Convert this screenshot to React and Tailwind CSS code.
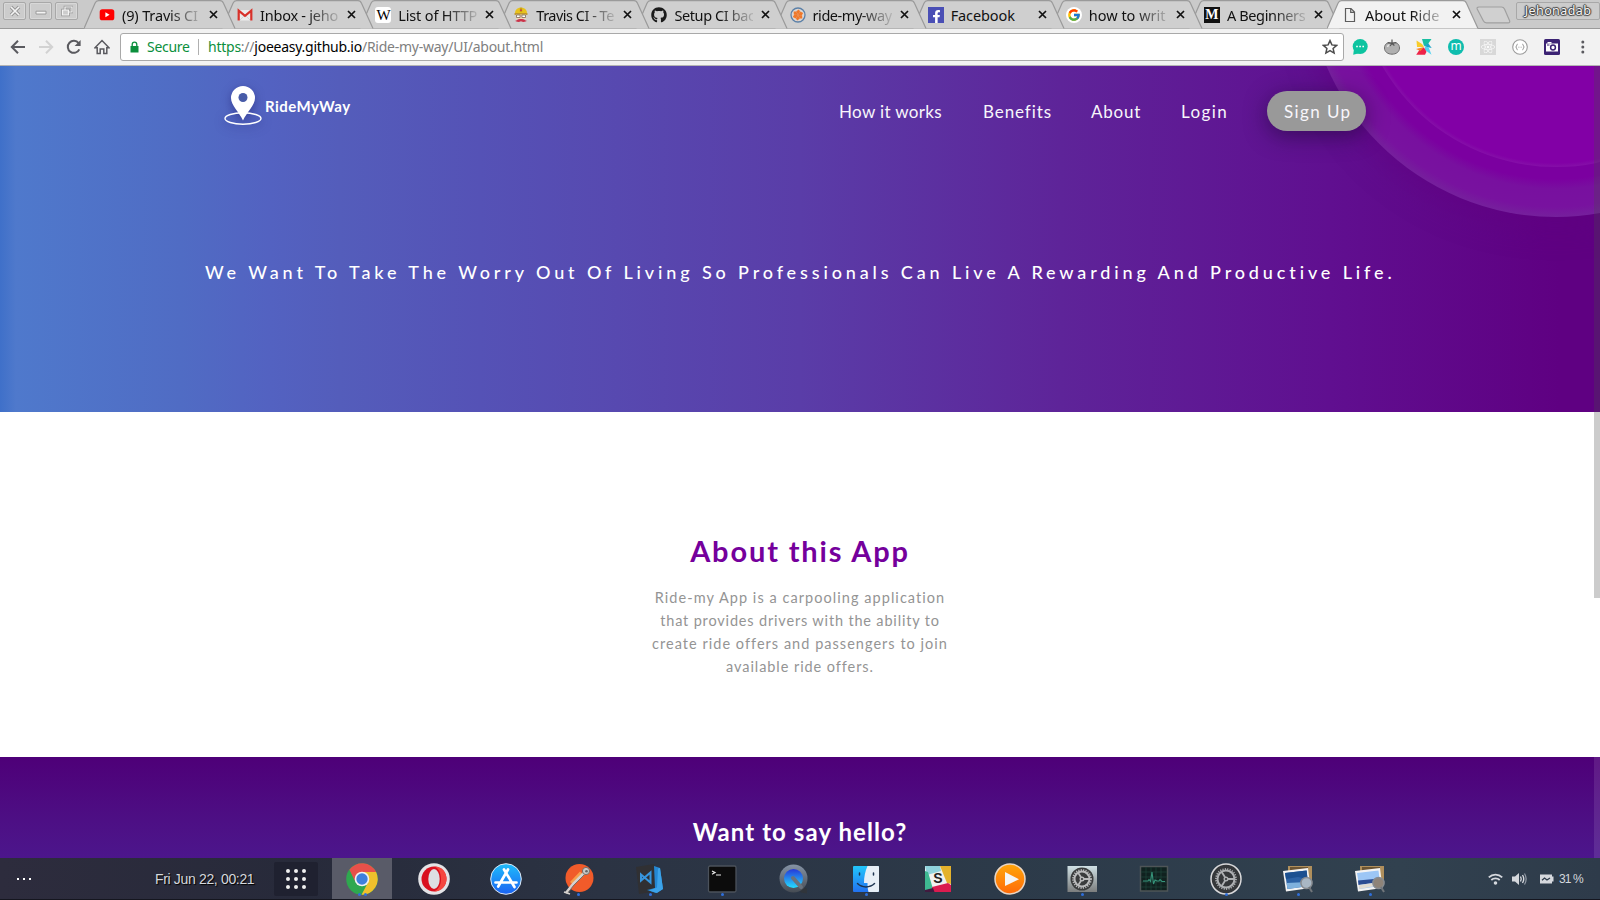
import React from "react";
import { FcGoogle } from "react-icons/fc";
import { FaGithub, FaFacebookF, FaReact } from "react-icons/fa";

const Svg = ({ size = 16, box = 16, className = "", children }) => (
  <svg width={size} height={size} viewBox={`0 0 ${box} ${box}`} className={`block shrink-0 ${className}`} fill="none">
    {children}
  </svg>
);

/* ---------- favicons ---------- */

const YouTube = () => (
  <Svg>
    <rect x="0.7" y="2.3" width="14.6" height="11" rx="2.6" fill="#f00" />
    <path d="M6.4 5.3v5l4.2-2.5z" fill="#fff" />
  </Svg>
);
const Gmail = () => (
  <Svg>
    <path d="M1.5 3h13v10.5h-13z" fill="#ececec" />
    <path d="M2.5 13.5 8 8l5.5 5.5" stroke="#d4d4d4" />
    <path d="M1.7 13.5V3.6L8 8.9l6.3-5.3v9.9" stroke="#d8312a" strokeWidth="2.2" />
  </Svg>
);
const Wikipedia = () => (
  <div className="flex h-4 w-4 items-center justify-center rounded-[3px] bg-white font-['Liberation_Serif',serif] text-[15px] leading-4 tracking-tighter text-black">W</div>
);
const Travis = () => (
  <Svg>
    <path d="M2 6.5C2 2.5 4.5.8 8 .8s6 1.7 6 5.7z" fill="#e8c21d" />
    <path d="M6.8.6h2.4v4.5H6.8z" fill="#c9a315" />
    <path d="M7.2 2.5h1.6v1.5H7.2z" fill="#cb3349" />
    <path d="M1.5 6.2h13v1.6h-13z" fill="#b88d18" />
    <path d="M3 7.6h10v4.4H3z" fill="#f1d6b6" />
    <path d="M3.5 8h3.6v2.5H3.5zM8.9 8h3.6v2.5H8.9z" fill="#fff" stroke="#7c6a55" strokeWidth=".8" />
    <path d="M2.2 13.8c2-.2 2.8-2.4 5.8-1.7 3-.7 3.8 1.5 5.8 1.7-1 1.4-4.4 1.5-5.8.4-1.4 1.1-4.8 1-5.8-.4z" fill="#cb3349" />
  </Svg>
);
const Wheel = () => (
  <Svg>
    <circle cx="8" cy="8" r="7" stroke="#5b80a8" strokeWidth="1.3" fill="#dcd6d2" />
    {[0, 60, 120, 180, 240, 300].map((a) => (
      <path key={a} d="M8 8 6.2 4.3 8.9 2.5l1.2 2.3z" fill="#f0782a" transform={`rotate(${a} 8 8)`} />
    ))}
  </Svg>
);
const Facebook = () => (
  <div className="flex h-4 w-4 items-end justify-end bg-[#4a4fb5] pr-px">
    <FaFacebookF size={13} color="#fff" />
  </div>
);
const Google = () => (
  <div className="flex h-4 w-4 items-center justify-center rounded-full bg-white"><FcGoogle size={14} /></div>
);
const Medium = () => (
  <div className="flex h-4 w-4 items-center justify-center bg-[#111] font-['Liberation_Serif',serif] text-[14px] leading-4 font-bold text-white">M</div>
);
const Page = () => (
  <Svg>
    <path d="M3.5 1.5h5.5l3.5 3.5v9.5h-9zM8.7 1.7v3.6h3.6" stroke="#5c5c5c" strokeWidth="1.2" />
  </Svg>
);

const tabs = [
  { icon: <YouTube />, title: "(9) Travis CI", track: "tracking-[-0.15px]" },
  { icon: <Gmail />, title: "Inbox - jeho", track: "tracking-[-0.25px]" },
  { icon: <Wikipedia />, title: "List of HTTP", track: "tracking-[-0.15px]" },
  { icon: <Travis />, title: "Travis CI - Te", track: "tracking-[-0.5px]" },
  { icon: <FaGithub size={16} color="#1b1b1b" />, title: "Setup CI bac", track: "tracking-[-0.4px]" },
  { icon: <Wheel />, title: "ride-my-way", track: "tracking-[-0.45px]" },
  { icon: <Facebook />, title: "Facebook", track: "tracking-[-0.1px]", full: true },
  { icon: <Google />, title: "how to writ", track: "tracking-[0px]" },
  { icon: <Medium />, title: "A Beginners", track: "tracking-[-0.35px]" },
  { icon: <Page />, title: "About Ride", track: "tracking-[-0.05px]", active: true },
];

function Tab({ tab, index }) {
  const fill = tab.active ? "#f2f2f2" : "#cfcfcf";
  return (
    <div className="relative -mr-[13.9px] h-[29px] w-[152px] shrink-0" style={{ zIndex: tab.active ? 30 : 20 - index }}>
      <svg className="absolute inset-0 block" width="152" height="29" viewBox="0 0 152 29" fill="none">
        <path d="M0 28.5 11 3.2Q12.2.6 14.5.6H136Q138.5.6 139.5 3.2L151 28.5z" fill={fill} />
        <path d="M0 28.5 11 3.2Q12.2.6 14.5.6H136Q138.5.6 139.5 3.2L151 28.5" stroke="#9a9a9a" strokeWidth="1.2" />
      </svg>
      <div className="relative flex h-[29px] items-center pl-[15px]">
        {tab.icon}
        <div className={`ml-[7px] w-[79px] ${tab.full ? "" : "[mask-image:linear-gradient(to_right,#000_46px,transparent_84px)]"}`}>
          <span className={`text-[14.5px] leading-[20px] whitespace-nowrap text-[#111] ${tab.track}`}>{tab.title}</span>
        </div>
        <Svg size={9} box={9} className="ml-[8px]">
          <path d="m1 1 7 7M8 1 1 8" stroke="#111" strokeWidth="1.7" />
        </Svg>
      </div>
    </div>
  );
}

const WindowButton = ({ children }) => (
  <div className="flex h-[18px] w-[23px] items-center justify-center rounded-[2px] border border-[#a8a8a8] bg-[#cccccc] shadow-[inset_0_0_0_1px_#d8d8d8]">{children}</div>
);

function TabStrip() {
  return (
    <div className="flex h-[29px] border-b border-[#9a9a9a] bg-[#cacaca]">
      <div className="flex w-[84px] shrink-0 gap-[3px] pt-[2px] pl-[3px]">
        <WindowButton>
          <Svg size={12} box={12}><path d="m2 2 8 8M10 2l-8 8" stroke="#949494" strokeWidth="3.4" /><path d="m2 2 8 8M10 2l-8 8" stroke="#f4f4f4" strokeWidth="1.7" /></Svg>
        </WindowButton>
        <WindowButton>
          <Svg size={12} box={12}><path d="M1 6.2h10v2.8H1z" fill="#f4f4f4" stroke="#949494" strokeWidth=".9" /></Svg>
        </WindowButton>
        <WindowButton>
          <Svg size={12} box={12}>
            <path d="M4 2h7v5H4zM1.5 5h6v5h-6z" stroke="#949494" strokeWidth="2.6" />
            <path d="M4 2h7v5H4z" stroke="#f4f4f4" strokeWidth="1.2" />
            <path d="M1.5 5h6v5h-6z" fill="#ccc" stroke="#f4f4f4" strokeWidth="1.2" />
          </Svg>
        </WindowButton>
      </div>
      <div className="flex w-[1392px] shrink-0">
        {tabs.map((t, i) => <Tab key={t.title} tab={t} index={i} />)}
      </div>
      <svg className="mt-[6px] block shrink-0" width="36" height="19" viewBox="0 0 36 19" fill="none">
        <path d="M3 1h22.500q2 0 3 2l5 11.500q1 2.300-1.500 2.300H10.500q-2.300 0-3.200-2L1.200 3Q.6 1 3 1z" fill="#d0d0d0" stroke="#a0a0a0" strokeWidth="1.2" />
      </svg>
      <div className="mt-[2px] ml-[4px] flex h-[18px] w-[84px] shrink-0 items-center justify-center rounded-[2px] border border-[#a8a8a8] bg-[#cccccc]">
        <span className="text-[12.5px] leading-4 tracking-[0.4px] text-[#f6f6f6] [text-shadow:0_0_1px_#333,1px_0_1px_#444,-1px_0_1px_#444,0_1px_1px_#444,0_-1px_1px_#444]">Jehonadab</span>
      </div>
    </div>
  );
}

/* ---------- toolbar ---------- */

const Slot = ({ children }) => <div className="flex w-8 shrink-0 items-center justify-center">{children}</div>;

function Toolbar() {
  return (
    <div className="flex h-[37px] items-center border-b border-[#b4b4b4] bg-[#f2f2f2]">
      <div className="flex w-[120px] shrink-0 items-center gap-[12px] pl-[10px]">
        <Svg><path d="M15 8H2M8 1.7 1.8 8 8 14.3" stroke="#5a5a5f" strokeWidth="2" /></Svg>
        <Svg><path d="M1 8h13M8 1.7 14.2 8 8 14.3" stroke="#d2d2d2" strokeWidth="2" /></Svg>
        <Svg>
          <path d="M13.3 10.3A6 6 0 1 1 12.6 4.2" stroke="#5a5a5f" strokeWidth="2" />
          <path d="M14.6 1v6H8.6z" fill="#5a5a5f" />
        </Svg>
        <Svg><path d="M1 8.8 8 1.6l7 7.2h-2.2v5.7H9.8V10H6.2v4.5h-3V8.8z" stroke="#5a5a5f" strokeWidth="1.5" /></Svg>
      </div>
      <div className="flex h-[28px] w-[1224px] shrink-0 items-center rounded-[3px] border border-[#a9a9a9] bg-white pl-[9px]">
        <svg width="9" height="12" viewBox="0 0 9 12" fill="none" className="block shrink-0">
          <path d="M.5 5h8v6.5h-8z" fill="#0b8f3c" /><path d="M2.2 5.5V3.400a2.300 2.300 0 0 1 4.600 0v2.100" stroke="#0b8f3c" strokeWidth="1.3" />
        </svg>
        <span className="ml-[8px] w-[51px] pb-px text-[14px] tracking-[-0.3px] whitespace-nowrap text-[#0b8f3c]">Secure</span>
        <span className="h-4 w-px bg-[#b0b0b0]" />
        <span className="ml-[9px] pb-px text-[14px] tracking-[-0.245px] whitespace-nowrap text-[#808080]">
          <span className="text-[#0b8f3c]">https</span>://<span className="text-black">joeeasy.github.io</span>/Ride-my-way/UI/about.html
        </span>
        <Svg className="mr-[5px] ml-auto"><path d="m8 1.6 1.9 4.3 4.7.5-3.5 3.1 1 4.6L8 11.7l-4.1 2.4 1-4.6L1.4 6.4l4.7-.5z" stroke="#4c4c4c" strokeWidth="1.5" /></Svg>
      </div>
      <div className="flex">
        <Slot>
          <Svg><circle cx="8.2" cy="7.5" r="7.5" fill="#0cc4a0" /><path d="m2 10-.8 5.8L8 14z" fill="#0cc4a0" /><path d="M4.2 6.7h1.6v1.5H4.2zM7.3 6.7h1.6v1.5H7.3zM10.4 6.7H12v1.5h-1.6z" fill="#fff" /></Svg>
        </Slot>
        <Slot>
          <Svg>
            <path d="M8 4.2c4-1.5 7.5.5 7.5 4.8 0 3.8-3.3 6.2-7.5 6.2S.5 12.8.5 9C.5 4.7 4 2.7 8 4.2z" fill="#b0b0b0" stroke="#6e6e6e" />
            <path d="M3.5 8c.3-1.3 1-2 2-2.3" stroke="#e2e2e2" strokeWidth="1.6" />
            <path d="M8 .5v4M3.7 3.6 8 4.5l4.3-1M8 4.5 6 7M8 4.5 10.4 6.5" stroke="#555" strokeWidth="1.2" />
          </Svg>
        </Slot>
        <Slot>
          <Svg>
            <path d="M6 0h9.500L12 5 8 7z" fill="#19bfa2" /><path d="M8 7l4-3 3.700 5L11 8z" fill="#1ba5c9" /><path d="M9 8h3.500l3 7.700L9 11z" fill="#55d2f1" />
            <path d="M8 8.500 4 10 .2 15.700H9l1.500-3z" fill="#ee2349" /><path d="M.5 1.500 6 5l2 3H1z" fill="#f8cc2a" /><path d="M0 10l8-2-3.500 4z" fill="#f6862b" />
          </Svg>
        </Slot>
        <Slot><div className="flex h-4 w-4 items-center justify-center rounded-full bg-[#0fbdae] pb-[2px] text-[12px] leading-none text-white">m</div></Slot>
        <Slot><div className="flex h-4 w-4 items-center justify-center bg-[#d8d8d8]"><FaReact size={14} color="#fafafa" /></div></Slot>
        <Slot>
          <Svg><circle cx="8" cy="8" r="7.3" fill="#fff" stroke="#9b9b9b" strokeWidth="1.1" /><path d="M5.6 5.2c-1.5 0-.3 2.4-1.9 2.8 1.6.4.4 2.8 1.9 2.8M10.4 5.2c1.5 0 .3 2.4 1.9 2.8-1.6.4-.4 2.8-1.9 2.8M6.5 8.2h.8M8.7 8.2h.8" stroke="#8a8a8a" /></Svg>
        </Slot>
        <Slot>
          <Svg><rect width="16" height="16" rx="1.5" fill="#3c2374" /><path d="M2 4.5h12v8H2z" fill="#fff" /><path d="M3.5 3h4v1.5h-4z" fill="#fff" /><circle cx="9" cy="8.5" r="2.4" stroke="#3c2374" strokeWidth="1.5" /><path d="M3 6h2.5" stroke="#3c2374" /></Svg>
        </Slot>
        <Slot><Svg><circle cx="6.8" cy="3" r="1.5" fill="#5a5a5f" /><circle cx="6.8" cy="8" r="1.5" fill="#5a5a5f" /><circle cx="6.8" cy="13" r="1.5" fill="#5a5a5f" /></Svg></Slot>
      </div>
    </div>
  );
}

/* ---------- web page ---------- */

function Hero() {
  return (
    <header className="relative h-[346px] overflow-hidden bg-[linear-gradient(to_right,#3f70c9_0px,#4f79cc_16px,#506cc4_180px,#5362c1_270px,#545dbb_340px,#5552b6_480px,#5a3da8_800px,#5e2499_1060px,#600f90_1330px,#5f0082_1560px)] font-['Lato',sans-serif]">
      <div className="absolute top-[-349px] left-[1306px] h-[500px] w-[500px] rounded-full bg-[radial-gradient(circle,#7b00a0_0px,#7b00a0_212px,#78109f_222px,#78129f_240px,#75209c_250px)] shadow-[0_8px_30px_rgba(96,0,130,0.6)]" />
      <div className="absolute top-[-299px] left-[1356px] h-[400px] w-[400px] rounded-full bg-[radial-gradient(circle,#8200a6_0px,#8200a6_196px,#850fa8_200px)]" />
      <div className="relative flex h-[90px] items-center pl-[224px]">
        <svg width="38" height="40" viewBox="0 0 38 40" fill="none" className="mt-[-10px] block shrink-0 overflow-visible drop-shadow-[0_3px_5px_rgba(30,30,110,0.5)]">
          <ellipse cx="19" cy="32.5" rx="18" ry="5.7" stroke="#fff" strokeWidth="1.4" />
          <path d="M19 34.5C15.5 26.5 7 19.5 7 12a12 12 0 0 1 24 0c0 7.5-8.5 14.5-12 22.5z" fill="#fff" />
          <circle cx="19" cy="11.5" r="4.5" fill="#475ba8" />
        </svg>
        <span className="ml-[3px] w-[574px] pb-[10px] text-[15px] leading-5 font-bold tracking-[0.45px] text-white">RideMyWay</span>
        <nav className="flex items-center text-[17px] leading-5 whitespace-nowrap text-[#f8f6fb]">
          <a className="w-[144px] pt-px tracking-[0.35px]">How it works</a>
          <a className="w-[108px] pt-px tracking-[0.9px]">Benefits</a>
          <a className="w-[90px] pt-px tracking-[0.8px]">About</a>
          <a className="w-[86px] pt-px tracking-[1.4px]">Login</a>
          <a className="flex h-10 w-[99px] items-center rounded-[20px] bg-[#999] pt-px pl-[17px] tracking-[1.4px] shadow-[0_5px_22px_rgba(25,10,50,0.55)]">Sign Up</a>
        </nav>
      </div>
      <h1 className="relative mt-[104px] pl-[205px] text-[18px] leading-6 font-medium tracking-[3.87px] whitespace-nowrap text-white">
        We Want To Take The Worry Out Of Living So Professionals Can Live A Rewarding And Productive Life.
      </h1>
    </header>
  );
}

function About() {
  return (
    <section className="flex h-[345px] flex-col items-center bg-white pt-[119px] font-['Lato',sans-serif]">
      <h2 className="text-[29px] leading-[40px] font-bold tracking-[1.85px] text-[#75009c]">About this App</h2>
      <p className="mt-[15px] flex flex-col items-center text-[14.5px] leading-[23px] text-[#949494]">
        <span className="tracking-[1.05px]">Ride-my App is a carpooling application</span>
        <span className="tracking-[0.83px]">that provides drivers with the ability to</span>
        <span className="tracking-[1.03px]">create ride offers and passengers to join</span>
        <span className="tracking-[0.93px]">available ride offers.</span>
      </p>
    </section>
  );
}

function Contact() {
  return (
    <section className="flex h-[101px] justify-center bg-gradient-to-b from-[#4e0078] to-[#4c168c] pt-[58px] font-['Lato',sans-serif]">
      <h2 className="text-[24px] leading-[34px] font-bold tracking-[1.08px] text-white">Want to say hello?</h2>
    </section>
  );
}

/* ---------- dock ---------- */

const Chrome = () => (
  <Svg size={32} box={32}>
    <circle cx="16" cy="16" r="15.8" fill="#2fa84f" />
    <path d="M16 9h14.1A15.8 15.8 0 0 1 15.5 31.8L22 19.5z" fill="#efc02c" />
    <path d="M16 16 8 18 3.3 6.8A15.8 15.8 0 0 1 30.2 9H16z" fill="#e8504a" />
    <path d="M3.3 6.8 9.7 19.6 13 28 8 29.5 1 20Z" fill="#2fa84f" />
    <circle cx="16" cy="16" r="7.3" fill="#f2f2f2" /><circle cx="16" cy="16" r="5.7" fill="#3f80dc" />
  </Svg>
);
const Opera = () => (
  <Svg size={32} box={32}>
    <circle cx="16" cy="16" r="15.8" fill="#e3e3e6" />
    <circle cx="16" cy="16" r="12.5" fill="#d9101f" />
    <path d="M16 3.5c10 0 12.5 7 12.5 12.5S25 28.5 16 28.5c5-2 7-7 7-12.5S21 5 16 3.5z" fill="#f5463f" />
    <ellipse cx="16" cy="16" rx="5.7" ry="10" fill="#dddfe3" />
  </Svg>
);
const AppStore = () => (
  <Svg size={32} box={32}>
    <defs><linearGradient id="as" x2="0" y2="1"><stop stopColor="#1fbdfb" /><stop offset="1" stopColor="#1a62f2" /></linearGradient></defs>
    <circle cx="16" cy="16" r="15.3" fill="url(#as)" stroke="#dfe9f5" strokeWidth="1" />
    <path d="M14 6.5 24.5 24M18 6.5 8.2 23.5M5.5 19.5h21" stroke="#fff" strokeWidth="2.7" strokeLinecap="round" />
  </Svg>
);
const Postman = () => (
  <Svg size={32} box={32}>
    <circle cx="17.5" cy="15" r="14" fill="#f15b2a" />
    <path d="M8 19 18 8.5l4 4L12 22z" fill="#f6a04d" />
    <path d="M22 10 11 21 4 30" stroke="#d6d2cf" strokeWidth="2.6" />
    <path d="M22 12 12 22 5 31" stroke="#77706c" strokeWidth="1" />
    <circle cx="24" cy="8" r="3.6" fill="#c9c9c9" stroke="#776e68" strokeWidth="1" /><circle cx="24.5" cy="8.3" r="1.3" fill="#666" />
    <path d="m2 29 6 2" stroke="#d6d2cf" strokeWidth="1.5" />
  </Svg>
);
const Code = () => (
  <Svg size={32} box={32}>
    <path d="m2 4 18-3 4 27L5 31z" fill="#303033" />
    <path d="m20 3 6 2 3 21-7 4-9-3 8-2z" fill="#2487d2" />
    <path d="m24 5.500 2-.500 3 21-6 4-8-2.500 8-3z" fill="#3ba3ea" />
    <path d="m7 11.500 9.500 8V9.500L7 17.500z" stroke="#3795dd" strokeWidth="2" />
  </Svg>
);
const Terminal = () => (
  <Svg size={32} box={32}>
    <rect x="2.5" y="3" width="27.5" height="26" rx="1.5" fill="#0c0c0c" stroke="#4b525b" strokeWidth="1.3" />
    <path d="m6 8 3 1.6L6 11.2M10 12h5" stroke="#e8e8e8" strokeWidth="1.2" />
  </Svg>
);
const QuickTime = () => (
  <Svg size={32} box={32}>
    <defs><linearGradient id="qa" x2="0" y2="1"><stop stopColor="#8593a5" /><stop offset="1" stopColor="#454b53" /></linearGradient>
      <linearGradient id="qb" x2="0" y2="1"><stop stopColor="#2638d8" /><stop offset="1" stopColor="#25ddff" /></linearGradient></defs>
    <path d="m18 22 11 3.5v5l-6-1z" fill="#30353b" />
    <circle cx="15.500" cy="15.500" r="14" fill="url(#qa)" />
    <circle cx="15.500" cy="15.500" r="9.500" fill="url(#qb)" />
    <path d="m15 15 8 9" stroke="#69727d" strokeWidth="4" strokeLinecap="round" />
  </Svg>
);
const Finder = () => (
  <Svg size={32} box={32}>
    <defs><linearGradient id="fi" x2="0" y2="1"><stop stopColor="#22c6fb" /><stop offset="1" stopColor="#2272f0" /></linearGradient></defs>
    <rect x="3" y="3" width="26" height="26" rx="1" fill="url(#fi)" />
    <path d="M17.5 3H28a1 1 0 0 1 1 1v24a1 1 0 0 1-1 1H18.5c-.7-3-1-5-1-9h-3.5c0-6 1.2-12 3.5-17z" fill="#e6eef6" />
    <path d="M9.5 10v2M23.5 10v2M7.5 20.5c4.500 4.500 12.500 4.500 17 0" stroke="#1c3350" strokeWidth="1.5" strokeLinecap="round" />
  </Svg>
);
const Slack = () => (
  <div className="relative h-8 w-8">
    <Svg size={32} box={32}>
      <path d="M3 3h26v26H3z" fill="#f0f1f1" />
      <path d="M3 3h15l1 5L5 12z" fill="#8fd3dc" /><path d="M18 3h11v18l-4-1z" fill="#e4b22c" />
      <path d="m3 8 3 1 5 17-8 2z" fill="#3eb991" /><path d="m10 24 16-4 3 2v7H11z" fill="#da1c4f" /><path d="M3 27l8-2 1.5 4H3z" fill="#411a3f" />
    </Svg>
    <span className="absolute inset-0 flex items-center justify-center text-[14px] font-bold text-[#222]">S</span>
  </div>
);
const Player = () => (
  <Svg size={32} box={32}>
    <defs><linearGradient id="pl" x2="0" y2="1"><stop stopColor="#ffa60a" /><stop offset="1" stopColor="#ff6a08" /></linearGradient></defs>
    <circle cx="16" cy="16" r="15" fill="url(#pl)" stroke="#e9d6c4" strokeWidth="1.5" />
    <path d="m11 9 14 7.2L11 23z" fill="#f4f4f4" />
  </Svg>
);
const Gear = ({ r, cy, color }) => (
  <g stroke={color}>
    <circle cx="16" cy={cy} r={r} strokeWidth="2" />
    <circle cx="16" cy={cy} r={r + 1.5} strokeWidth="1.8" strokeDasharray="1.2 1.2" />
    <circle cx="16" cy={cy} r="1.8" strokeWidth="1.4" />
    <path d={`M18 ${cy}h${r - 2}M15 ${cy - 1.7}l-${r / 2 - 1}-${r * 0.86 - 2}M15 ${cy + 1.7}l-${r / 2 - 1} ${r * 0.86 - 2}`} strokeWidth="1.8" />
  </g>
);
const Settings = () => (
  <Svg size={32} box={32}>
    <defs><linearGradient id="se" x2="0" y2="1"><stop stopColor="#cfe0e4" /><stop offset="1" stopColor="#7b7d7d" /></linearGradient></defs>
    <path d="M1.5 3h29.5v26H1.5z" fill="url(#se)" /><circle cx="16" cy="16" r="11.5" fill="#3a3c3d" /><Gear r={7.5} cy={16} color="#b9babb" />
  </Svg>
);
const Monitor = () => (
  <Svg size={32} box={32}>
    <rect x="2.5" y="3.5" width="27" height="24.5" fill="#10211f" stroke="#4e5557" strokeWidth="1.5" />
    <path d="M8 4v23M13 4v23M18 4v23M23 4v23M3 9h26M3 14h26M3 19h26M3 24h26" stroke="#1c4138" strokeWidth=".8" />
    <path d="M5 18h5l1-1.5 1.5 2L14 9l1.5 12 1.5-4 2 1h2l1-1.5 2 2h3" stroke="#36947a" strokeWidth="1.1" />
  </Svg>
);
const GearRound = () => (
  <Svg size={32} box={32}>
    <circle cx="16" cy="16" r="15" fill="#35373a" stroke="#d9d9db" strokeWidth="1.5" /><Gear r={8.5} cy={16} color="#aeb0b3" />
  </Svg>
);
const Photo = ({ alt }) => (
  <Svg size={32} box={32}>
    <path d="M6 3h24v20H6z" fill="#b08f5c" /><path d="M8 4h18v5H8z" fill="#6c5432" />
    <path d="m1 8 25-3 2.5 20L4 28.5z" fill="#f3f3f3" />
    {alt ? (
      <g><path d="m3 10 21.5-2.5L26.5 23 5.5 26z" fill="#9cc6f5" /><path d="m4 17.5 21.5-2 .5 3.5-21.5 3z" fill="#2c4d92" /><path d="m4.7 22 21.5-3 .5 3L5.5 26z" fill="#e1dcd2" /></g>
    ) : (
      <g><path d="m3 10 21.5-2.5L26.5 23 5.5 26z" fill="#2c62a5" /><path d="m4 16 12-2 9.5 2-.8-8.5L3 10z" fill="#1c5090" /><path d="m4.5 20 21-1 .8 4.2L5.5 26z" fill="#7fb1dd" /></g>
    )}
    <circle cx="24.5" cy="20" r="5.6" fill={alt ? "#8e8378" : "#a9b7c4"} stroke="#878b90" strokeWidth="1.5" />
    <path d="m27 24 3 5" stroke="#70757a" strokeWidth="2" />
  </Svg>
);

const dock = [
  { icon: <Chrome />, active: true, dots: 2 },
  { icon: <Opera /> },
  { icon: <AppStore /> },
  { icon: <Postman />, dots: 1 },
  { icon: <Code />, dots: 1 },
  { icon: <Terminal />, dots: 1 },
  { icon: <QuickTime /> },
  { icon: <Finder />, dots: 1 },
  { icon: <Slack /> },
  { icon: <Player /> },
  { icon: <Settings />, dots: 1 },
  { icon: <Monitor /> },
  { icon: <GearRound />, dots: 1 },
  { icon: <Photo />, dots: 1 },
  { icon: <Photo alt />, dots: 1 },
];

function Dock() {
  return (
    <footer className="flex h-[42px] items-center border-b border-[#15161f] bg-[linear-gradient(to_right,#2d2c3d,#272a3a_300px,#2b3343_600px,#2c3a49_1000px,#31414f_1400px,#2e3b4a)] font-['Liberation_Sans',sans-serif] text-[#d5d8dd]">
      <div className="flex w-[155px] shrink-0 gap-[4px] pl-[17px]">
        <i className="h-[2px] w-[2px] bg-white" /><i className="h-[2px] w-[2px] bg-white" /><i className="h-[2px] w-[2px] bg-white" />
      </div>
      <div className="w-[119px] shrink-0 pt-px text-[14px] tracking-[-0.34px] whitespace-nowrap [text-shadow:1px_1px_1px_#000]">Fri Jun 22, 00:21</div>
      <div className="mr-[14px] grid h-[34px] w-[44px] shrink-0 grid-cols-[repeat(3,4px)] place-content-center gap-[4px] rounded-[2px] bg-[#1f2130]">
        {Array.from({ length: 9 }, (_, i) => <i key={i} className="h-1 w-1 rounded-full bg-[#f0f0f0]" />)}
      </div>
      <div className="flex h-full w-[1153px] shrink-0">
        {dock.map((d, i) => (
          <div key={i} className={`relative mr-3 flex h-full w-[60px] shrink-0 items-center justify-center ${d.active ? "bg-[#595b68]" : ""}`}>
            {d.icon}
            {d.dots && (
              <div className="absolute bottom-[3px] flex gap-[3px]">
                {Array.from({ length: d.dots }, (_, k) => <i key={k} className="h-[3px] w-[3px] rounded-full bg-[#2f6fdc]" />)}
              </div>
            )}
          </div>
        ))}
      </div>
      <svg width="15" height="12" viewBox="0 0 15 12" fill="none" className="ml-[3px] block shrink-0" stroke="#d5d8dd" strokeWidth="1.8">
        <path d="M.8 4.3a9.5 9.5 0 0 1 13.4 0M3.3 7a6 6 0 0 1 8.4 0" /><circle cx="7.5" cy="10" r=".9" />
      </svg>
      <svg width="16" height="14" viewBox="0 0 16 14" fill="none" className="ml-[9px] block shrink-0">
        <path d="M0 4.500h3L7 1v12L3 9.500H0z" fill="#d5d8dd" /><path d="M8.500 4.500q1.500 2.500 0 5M10.500 3q2.500 4 0 8" stroke="#d5d8dd" strokeWidth="1.4" /><path d="M12.500 1.500q3.300 5.500 0 11" stroke="#9199a4" strokeWidth="1.2" />
      </svg>
      <svg width="15" height="10" viewBox="0 0 15 10" fill="none" className="ml-[11px] block shrink-0">
        <path d="M1 .5h12v2h1.500v5H13v2H1z" fill="#d5d8dd" /><path d="M3 6.200 5.500 4l2.500 2L11 4" stroke="#2e3b4a" strokeWidth="1.3" />
      </svg>
      <span className="ml-[5px] pt-px text-[12px] tracking-[-0.9px] whitespace-nowrap">31 %</span>
    </footer>
  );
}

export default function App() {
  return (
    <div className="relative flex h-[900px] w-[1600px] flex-col overflow-hidden bg-white font-['Noto_Sans','Open_Sans',sans-serif]">
      <TabStrip />
      <Toolbar />
      <main className="relative">
        <Hero />
        <About />
        <Contact />
        <div className="absolute top-0 right-0 h-[792px] w-[6px] bg-white/10" />
        <div className="absolute top-0 right-0 h-[532px] w-[6px] bg-black/20" />
      </main>
      <Dock />
    </div>
  );
}
